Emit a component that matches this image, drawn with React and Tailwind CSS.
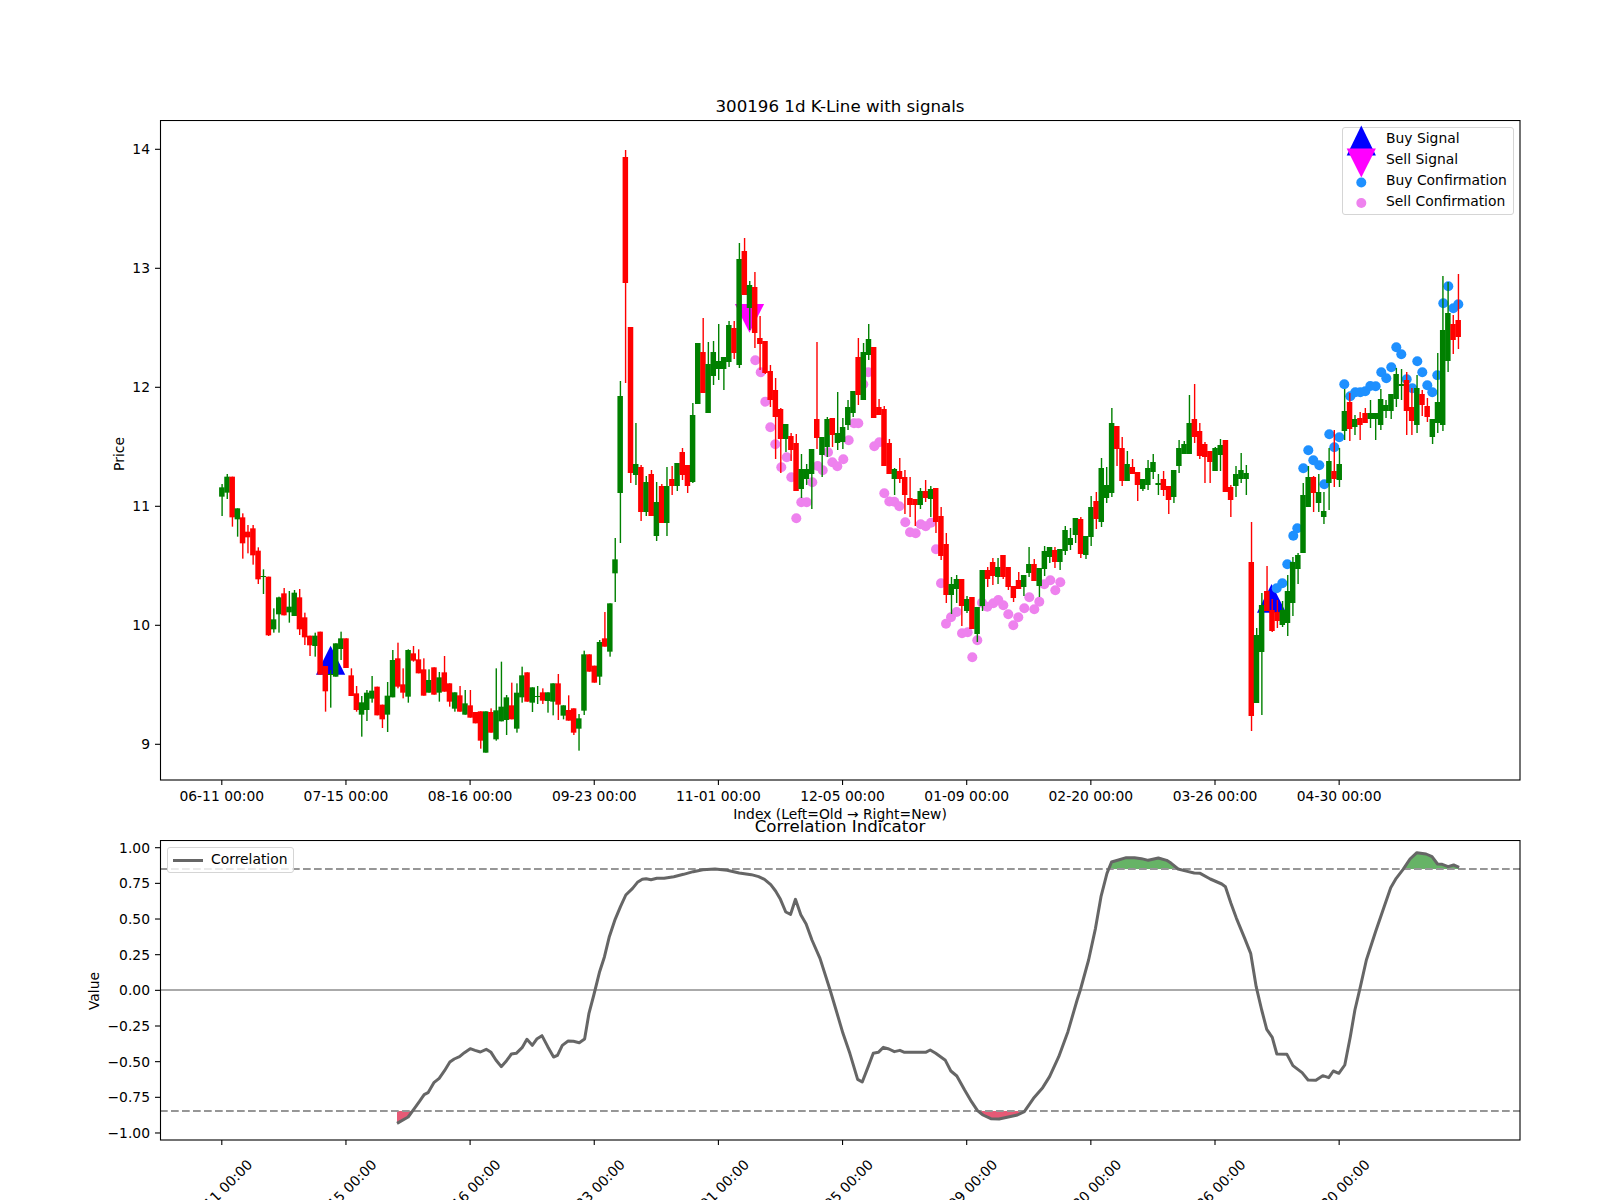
// K-line chart with signal markers and a correlation panel below it
const X0 = 221.8
const STEP = 5.173

// first stretch was read at 3x from (200,440): [color, x, wickTop, bodyTop, bodyBottom, wickBottom]
const earlyCandles = [
  ['g',67,132,142,170,228],['g',82,102,110,158,177],['r',96,110,110,232,260],['g',111,205,205,238,290],
  ['r',129,220,232,310,356],['r',145,255,275,292,340],['r',159,255,265,346,374],['r',174,322,332,418,432],
  ['g',190,388,408,411,462],['r',204,410,410,586,588],['g',222,505,538,568,578],['g',236,470,472,523,578],
  ['r',252,444,460,526,526],['g',267,453,500,517,548],['g',282,450,458,528,528],['r',297,447,472,568,585],
  ['r',314,518,532,592,615],['r',329,587,587,616,648],['g',344,578,587,618,650],['r',360,575,575,704,704],
  ['r',375,678,678,754,815],['g',391,690,702,705,803],['g',407,610,610,710,710],['g',422,575,595,627,660],
  ['r',437,595,595,684,684],['r',452,685,706,768,768],['r',468,738,760,810,815],['g',483,768,787,824,890],
  ['g',500,750,758,810,843],['g',516,708,752,776,788],['r',531,740,740,826,826],['r',546,794,794,838,864],
  ['g',561,726,767,824,876],['g',578,630,660,772,772],['r',594,608,655,740,745],['r',608,685,733,758,775],
  ['g',624,628,630,770,788],['r',639,618,640,662,665],['r',654,628,658,700,700],['r',672,655,688,767,767],
  ['g',686,688,720,758,758],['r',702,682,682,764,764],['g',717,696,712,758,785],['r',732,648,697,755,755],
  ['r',747,730,730,785,800],['g',764,757,757,806,815],['r',779,738,766,815,815],['g',794,750,790,824,824],
  ['r',810,750,796,833,833],['r',824,816,816,850,850],['r',840,814,814,902,926],['g',857,814,814,938,938],
  ['r',871,805,816,878,878],['g',887,685,811,898,902],['g',903,665,800,844,844],['g',918,765,772,840,885],
  ['r',934,728,796,838,838],['g',950,730,758,866,878],['g',965,680,706,772,788],['r',980,697,697,785,785],
  ['g',996,742,742,788,816],['g',1012,738,768,771,792],['r',1028,745,757,782,792],['g',1043,757,757,783,818],
  ['g',1058,730,730,785,826],['r',1073,702,730,794,840],['g',1089,796,796,827,838],['r',1103,766,810,842,842],
  ['r',1122,805,805,878,885],['g',1137,822,835,866,932],['g',1152,632,643,812,825],['r',1167,643,643,695,695],
  ['r',1182,677,677,728,728],['g',1197,600,606,710,735],['r',1213,516,595,620,620],['g',1229,490,490,635,650],
  ['g',1244,294,358,400,486],
].map(([c, x, a, b, d, e]) => [c, 200 + x / 3, 440 + a / 3, 440 + b / 3, 440 + d / 3, 440 + e / 3])

// the rest in page pixels
const laterCandles = [
  ['g',620,381,396,493,543],['r',625,150,157,283,383],['r',630,327,327,473,483],['g',636,423,464,475,485],
  ['r',641,465,467,512,521],['g',646,476,482,512,516],['r',651,470,474,516,516],['g',656,482,502,536,541],
  ['r',661,484,486,523,523],['g',667,467,486,523,536],['r',672,466,479,486,495],['g',677,463,463,486,491],
  ['r',682,448,452,475,480],['r',687,465,465,486,493],['g',693,403,415,482,483],['g',698,343,343,404,404],
  ['r',703,318,352,393,393],['g',708,342,364,413,413],['g',713,341,352,376,385],['g',718,324,361,369,380],
  ['g',724,357,357,369,390],['g',729,321,325,362,367],['r',734,321,328,353,359],['g',739,243,259,365,368],
  ['r',744,238,251,295,295],['g',749,281,285,308,330],['r',755,272,287,333,348],['r',760,316,338,344,370],
  ['r',765,341,341,373,374],['r',770,365,371,400,407],['r',775,378,390,417,459],['r',780,408,409,439,473],
  ['g',786,424,424,439,452],['r',791,433,436,450,461],['r',796,434,443,491,491],['g',801,454,469,489,498],
  ['g',806,464,469,479,485],['g',812,449,449,474,509],['r',817,342,419,438,449],['g',822,437,437,455,477],
  ['g',827,417,419,447,457],['r',832,418,418,435,447],['g',837,392,433,443,450],['g',843,418,427,442,449],
  ['g',848,400,407,425,430],['g',853,391,391,413,417],['r',858,338,357,395,405],['g',863,343,352,400,400],
  ['g',868,324,339,355,360],['r',874,347,347,418,418],['r',879,399,407,415,415],['r',884,406,409,466,466],
  ['r',889,439,443,474,474],['g',894,468,469,479,495],['r',899,458,471,479,483],['r',905,470,477,495,514],
  ['r',910,477,498,505,517],['r',915,499,499,505,526],['g',920,488,491,505,509],['r',925,480,491,498,502],
  ['g',931,486,489,499,517],['r',936,488,488,522,533],['r',941,507,516,556,560],['r',946,533,544,595,603],
  ['g',951,577,584,595,614],['g',956,575,579,589,603],['r',962,579,579,606,626],['g',967,596,599,611,613],
  ['r',972,597,597,629,629],['g',977,607,607,634,642],['g',982,570,570,606,611],['r',987,567,570,579,587],
  ['r',993,558,562,576,585],['g',998,558,567,577,584],['r',1003,555,555,577,579],['r',1008,567,567,587,590],
  ['r',1013,586,586,598,602],['r',1018,572,580,589,589],['g',1024,575,575,587,596],['g',1029,547,564,573,577],
  ['r',1034,559,564,581,581],['g',1039,568,568,586,597],['g',1044,546,551,569,576],['g',1050,547,547,557,563],
  ['r',1055,547,550,562,568],['g',1060,549,549,562,570],['g',1065,526,530,551,555],['g',1070,528,538,545,550],
  ['g',1075,518,518,535,543],['r',1081,517,519,554,558],['g',1086,536,536,555,559],['g',1091,496,507,537,546],
  ['r',1096,492,501,519,529],['g',1101,458,468,522,527],['g',1106,467,485,498,503],['g',1112,408,423,493,497],
  ['r',1117,426,426,449,466],['r',1122,437,448,481,486],['g',1127,451,464,481,481],['r',1132,459,467,474,474],
  ['r',1137,472,472,485,501],['g',1143,479,479,489,491],['g',1148,460,468,485,490],['g',1153,454,462,472,479],
  ['g',1158,474,483,485,495],['r',1163,471,479,490,496],['r',1168,486,486,500,514],['g',1174,470,470,497,503],
  ['g',1179,440,448,466,473],['g',1184,441,444,454,454],['g',1189,395,423,454,454],['r',1194,384,419,437,443],
  ['r',1200,423,431,456,459],['r',1205,442,444,457,483],['r',1210,451,451,462,483],['g',1215,447,448,471,471],
  ['g',1220,439,445,455,471],['r',1225,440,440,492,492],['r',1231,485,487,500,517],['g',1236,466,474,486,497],
  ['g',1241,453,470,479,483],['g',1246,465,473,479,495],['r',1251,522,562,716,731],['g',1256,628,635,703,703],
  ['g',1262,593,605,652,715],['r',1267,566,591,611,611],['r',1272,599,610,631,632],['r',1277,600,612,621,628],
  ['g',1282,601,610,625,627],['g',1287,575,591,623,636],['g',1293,557,562,603,616],['g',1298,553,555,569,584],
  ['g',1303,483,495,553,553],['g',1308,466,477,507,507],['r',1313,476,477,493,512],['g',1319,474,492,503,512],
  ['g',1324,492,511,517,524],['g',1329,448,461,483,510],['r',1334,430,471,479,487],['g',1339,448,464,480,487],
  ['g',1344,389,411,431,440],['r',1350,393,402,429,441],['g',1355,415,419,427,435],['r',1360,412,418,425,440],
  ['r',1365,408,413,423,423],['g',1370,400,413,419,428],['g',1375,413,413,419,440],['g',1381,389,399,425,430],
  ['g',1386,400,405,411,418],['g',1391,394,394,411,419],['g',1396,368,374,399,407],['g',1401,369,384,386,400],
  ['r',1406,372,380,411,435],['r',1412,388,407,421,435],['g',1417,375,388,425,433],['r',1422,390,394,405,416],
  ['r',1427,398,406,417,422],['g',1432,419,419,437,444],['g',1437,353,402,423,433],['g',1443,276,330,425,431],
  ['g',1448,282,313,361,372],['r',1453,315,324,340,354],['r',1458,274,320,337,349],
]

const candles = [...earlyCandles, ...laterCandles].map(([c, x, a, b, d, e]) => {
  const i = Math.round((x - X0) / STEP)
  return { color: c === 'r' ? '#ff0000' : '#008000', x: X0 + i * STEP, wickTop: a, bodyTop: b, bodyBottom: d, wickBottom: e }
})

const sellDots = [
  [755.3,360.3],[760.7,372.3],[765.3,401.7],[770.3,427.3],[775.3,444.3],[786.7,457.3],[781.3,467.3],[791.3,477.3],
  [796.3,518.3],[801.3,502.3],[806.7,502.3],[812.3,482.3],[817.7,466],[822.7,470.3],[828,452.3],[832.3,462.3],
  [837.3,466.3],[843.3,459.3],[848.7,440.3],[854,423.3],[858.3,423.3],[868.3,372.3],[863.3,384.3],[874.3,446.3],
  [879.3,442.3],[884.3,493.3],[889.3,501.5],[894.3,501.7],[899.3,506.3],[905.3,522.3],[910,532.3],[915.7,533.3],
  [920.7,524.3],[925.7,526.3],[931,522.7],[936,549.3],[941,583.3],[946,623.7],[951,617.3],[956.7,612],[962,633.3],
  [967.7,632.3],[977.3,640.3],[972.3,657.3],[982,602.7],[987.3,606.7],[993.3,603.3],[998.3,600],[1003.3,605.3],
  [1008.3,614.3],[1013.3,625.3],[1018.3,617.3],[1024.3,608.3],[1029.3,597.3],[1034.3,609.3],[1039.3,601.7],
  [1044.3,584.3],[1050.3,580.3],[1055.3,590.3],[1060.3,582.3],
]

const buyDots = [
  [1276.7,588.3],[1282.3,583.3],[1287.3,564.3],[1293.3,535.7],[1297.3,528.3],[1303.3,468.3],[1308.3,450.3],
  [1313.3,460.3],[1319.3,465.3],[1324.3,484.3],[1329.3,434.3],[1334.3,447.3],[1339.3,437.3],[1344.3,384.3],
  [1350.3,396.3],[1355.3,392.3],[1360.3,392.3],[1365.3,391.3],[1370.3,386],[1375.7,386.3],[1381.3,372.3],
  [1386.3,378.3],[1391.3,367.3],[1396.3,347.3],[1401.3,354.3],[1406.7,379.3],[1412.3,388.3],[1417.3,361.3],
  [1422.3,372.3],[1427.3,385.3],[1432.3,392.3],[1437.3,375.3],[1443.3,303.3],[1448.3,286.3],[1453.3,308.3],
  [1458.3,304.3],
]

// correlation line, read from two crops with different x scales
const corrLeft = [
  [654,1000],[677,981],[690,955],[700,935],[710,914],[718,908],[730,878],[741,865],[752,842],[763,816],[772,807],
  [783,800],[793,788],[805,776],[815,781],[826,786],[838,778],[848,787],[858,810],[869,830],[880,812],[890,792],
  [900,790],[912,773],[922,748],[933,766],[943,746],[953,737],[965,770],[977,801],[985,796],[995,766],[1007,753],
  [1018,754],[1030,758],[1041,747],[1050,670],[1060,615],[1072,545],[1082,500],[1092,440],[1104,388],[1115,350],
  [1126,315],[1140,295],[1150,277],[1160,268],[1168,266],[1178,269],[1190,265],[1205,265],[1225,260],[1245,253],
  [1265,245],[1285,239],[1310,237],[1335,241],[1360,249],[1385,254],[1400,260],[1412,268],[1425,284],[1435,303],
  [1445,328],[1456,366],[1466,373],[1476,328],[1487,374],[1498,402],[1510,450],
].map(([x, y]) => [80 + x / 2.063, 790 + y / 3])

const corrRight = [
  [0,505],[22,600],[35,660],[50,730],[65,790],[82,868],[92,876],[105,830],[116,790],[127,787],[138,772],[150,777],
  [162,785],[174,781],[184,787],[205,787],[230,787],[240,780],[252,790],[273,811],[285,843],[298,858],[315,900],
  [330,935],[343,962],[355,975],[372,986],[390,987],[410,981],[430,975],[445,965],[465,925],[485,893],[500,860],
  [520,800],[540,725],[560,630],[567,600],[585,510],[600,415],[612,320],[625,250],[635,216],[650,210],[667,203],
  [685,203],[700,206],[715,211],[737,204],[755,211],[765,220],[780,237],[800,244],[815,249],[828,250],[850,267],
  [875,282],[883,290],[895,340],[907,385],[925,445],[938,490],[950,590],[962,660],[973,718],[985,742],[995,792],
  [1017,793],[1030,827],[1050,848],[1063,870],[1080,871],[1095,857],[1108,863],[1118,843],[1130,850],[1143,825],
  [1155,740],[1165,660],[1177,590],[1190,510],[1210,425],[1230,345],[1243,293],[1255,265],[1270,238],[1285,207],
  [1300,188],[1320,192],[1333,200],[1345,222],[1355,223],[1368,230],[1380,225],[1392,232],
].map(([x, y]) => [820 + x / 2.178, 790 + y / 3])

const corr = [...corrLeft, ...corrRight]
const corrPoints = corr.map((p) => p.join(',')).join(' ')
const firstX = corr[0][0]
const lastX = corr[corr.length - 1][0]

const TICK_DATES = ['06-11', '07-15', '08-16', '09-23', '11-01', '12-05', '01-09', '02-20', '03-26', '04-30']
const ticks = TICK_DATES.map((d, k) => ({ x: X0 + k * 124.15, label: `${d} 00:00` }))

const priceTicks = [14, 13, 12, 11, 10, 9].map((p) => ({ label: String(p), y: 744.3 - (p - 9) * 119 }))
const corrTicks = ['1.00', '0.75', '0.50', '0.25', '0.00', '−0.25', '−0.50', '−0.75', '−1.00'].map((label, k) => ({
  label,
  y: 847.7 + k * 35.66,
}))

const Triangle = ({ x, base, apex, color, half = 14.6 }) => (
  <polygon points={`${x - half},${base} ${x + half},${base} ${x},${apex}`} fill={color} />
)

const YTicks = ({ items }) =>
  items.map((t) => (
    <g key={t.label}>
      <line x1="155" x2="160" y1={t.y} y2={t.y} stroke="#000" strokeWidth="1.1" />
      <text x="150" y={t.y + 5} textAnchor="end" className="text-[13.89px]">
        {t.label}
      </text>
    </g>
  ))

const PriceChart = () => (
  <svg viewBox="0 120 1600 685" className="block w-[1600px] h-[685px]">
    <Triangle x={330.6} base={674.7} apex={645.7} color="#0000ff" />
    <Triangle x={1271.6} base={612.7} apex={584} color="#0000ff" />
    <Triangle x={749.5} base={304} apex={332.7} color="#ff00ff" />
    {sellDots.map(([x, y]) => (
      <circle key={`${x}-${y}`} cx={x} cy={y} r="5" fill="#ee82ee" />
    ))}
    {buyDots.map(([x, y]) => (
      <circle key={`${x}-${y}`} cx={x} cy={y} r="5" fill="#1e90ff" />
    ))}
    {candles.map((c) => (
      <g key={c.x} fill={c.color}>
        <rect x={c.x - 0.4} width="1.4" y={c.wickTop} height={c.wickBottom - c.wickTop} />
        <rect x={c.x - 2.7} width="5.5" y={c.bodyTop} height={c.bodyBottom - c.bodyTop} />
      </g>
    ))}
    <rect x="160.5" y="120.5" width="1359.5" height="659.5" fill="none" stroke="#000" strokeWidth="1.1" />
    <YTicks items={priceTicks} />
    {ticks.map((t) => (
      <g key={t.x}>
        <line x1={t.x} x2={t.x} y1="780" y2="785" stroke="#000" strokeWidth="1.1" />
        <text x={t.x} y="801" textAnchor="middle" className="text-[13.89px]">
          {t.label}
        </text>
      </g>
    ))}
    <text transform="translate(124 454) rotate(-90)" textAnchor="middle" className="text-[13.89px]">
      Price
    </text>
  </svg>
)

const CorrChart = () => (
  <svg viewBox="0 840 1600 360" className="block w-[1600px] h-[360px]">
    <defs>
      <clipPath id="above">
        <rect x="160" y="840" width="1360" height="29" />
      </clipPath>
      <clipPath id="below">
        <rect x="160" y="1111" width="1360" height="29" />
      </clipPath>
    </defs>
    <polygon points={`${corrPoints} ${lastX},869 ${firstX},869`} fill="#008000" fillOpacity="0.6" clipPath="url(#above)" />
    <polygon points={`${corrPoints} ${lastX},1111 ${firstX},1111`} fill="#dc143c" fillOpacity="0.7" clipPath="url(#below)" />
    <line x1="160" x2="1520" y1="990" y2="990" stroke="#aaaaaa" strokeWidth="2" />
    <line x1="160" x2="1520" y1="869" y2="869" stroke="#969696" strokeWidth="2" strokeDasharray="7.7 3.3" />
    <line x1="160" x2="1520" y1="1111" y2="1111" stroke="#969696" strokeWidth="2" strokeDasharray="7.7 3.3" />
    <polyline points={corrPoints} fill="none" stroke="#666666" strokeWidth="3" strokeLinejoin="round" />
    <rect x="160.5" y="840.5" width="1359.5" height="299.5" fill="none" stroke="#000" strokeWidth="1.1" />
    <YTicks items={corrTicks} />
    {ticks.map((t) => (
      <g key={t.x}>
        <line x1={t.x} x2={t.x} y1="1140" y2="1145" stroke="#000" strokeWidth="1.1" />
        <text
          transform={`translate(${t.x - 2} 1192) rotate(-45)`}
          y="5"
          textAnchor="middle"
          className="text-[13.89px]"
        >
          {t.label}
        </text>
      </g>
    ))}
    <text transform="translate(99 991) rotate(-90)" textAnchor="middle" className="text-[13.89px]">
      Value
    </text>
  </svg>
)

const LegendRow = ({ label, children }) => (
  <div className="flex h-[21px] items-center">
    <svg viewBox="0 0 43 21" className="h-[21px] w-[43px] shrink-0 overflow-visible">
      {children}
    </svg>
    <span>{label}</span>
  </div>
)

const SignalLegend = () => (
  <div className="absolute top-[7px] right-[86px] h-[88px] w-[172px] rounded-[3px] border border-[#d5d5d5] bg-white/80 pt-[0.5px] text-[13.89px] leading-none">
    <LegendRow label="Buy Signal">
      <Triangle x={18.3} base={26.5} apex={-3.5} color="#0000ff" />
    </LegendRow>
    <LegendRow label="Sell Signal">
      <Triangle x={18.3} base={-1.5} apex={27.5} color="#ff00ff" />
    </LegendRow>
    <LegendRow label="Buy Confirmation">
      <circle cx="18.3" cy="11.5" r="5" fill="#1e90ff" />
    </LegendRow>
    <LegendRow label="Sell Confirmation">
      <circle cx="18.3" cy="11" r="5" fill="#ee82ee" />
    </LegendRow>
  </div>
)

const CorrLegend = () => (
  <div className="absolute top-[7px] left-[167px] flex h-[26px] w-[127px] items-center rounded-[3px] border border-[#d5d5d5] bg-white/80 text-[13.89px] leading-none">
    <span className="ml-[5px] mr-[8px] h-[3px] w-[30px] bg-[#666666]" />
    <span>Correlation</span>
  </div>
)

export default function App() {
  return (
    <div className="h-[1200px] w-[1600px] overflow-hidden bg-white font-['DejaVu_Sans',sans-serif] text-black">
      <div className="ml-[160px] flex h-[120px] w-[1360px] items-end justify-center pb-[3px] text-[16.67px] leading-[20px]">
        300196 1d K-Line with signals
      </div>
      <div className="relative">
        <PriceChart />
        <SignalLegend />
      </div>
      <div className="ml-[160px] flex h-[35px] w-[1360px] flex-col items-center">
        <div className="text-[13.89px] leading-[18px]">Index (Left=Old → Right=New)</div>
        <div className="-mt-[6px] text-[16.67px] leading-[20px]">Correlation Indicator</div>
      </div>
      <div className="relative">
        <CorrChart />
        <CorrLegend />
      </div>
    </div>
  )
}
